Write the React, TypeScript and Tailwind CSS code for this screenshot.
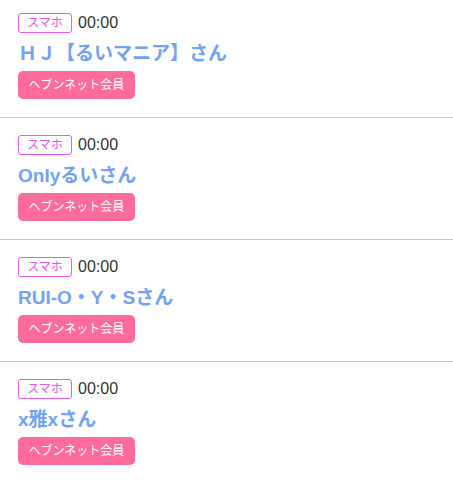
const members = [
  { name: 'ＨＪ【るいマニア】さん' },
  { name: 'Onlyるいさん' },
  { name: 'RUI-O・Y・Sさん' },
  { name: 'x雅xさん' },
]

export default function App() {
  return (
    <div className="w-[453px] h-[480px] bg-white overflow-hidden font-['Liberation_Sans','Noto_Sans_CJK_JP',sans-serif]">
      <ul>
        {members.map((m, i) => (
          <li
            key={i}
            className="px-[18px] pt-[17px] pb-[18px] first:pt-[13px] border-b border-[#cccccc]"
          >
            <div className="flex items-center h-[20px]">
              <span className="w-[54px] h-[20px] flex items-center justify-center border border-[#e85ce8] rounded-[3px] text-[12px] text-[#e05ae0] leading-none">
                スマホ
              </span>
              <span className="ml-[6px] text-[16px] text-[#333333] leading-none">00:00</span>
            </div>
            <div className="mt-[7px] text-[19px] leading-[28px] font-bold text-[#72a2f2]">
              {m.name}
            </div>
            <button
              type="button"
              className="mt-[3px] w-[117px] h-[28px] rounded-[5px] bg-[#ff6b9b] text-white text-[12px] leading-none flex items-center justify-center"
            >
              ヘブンネット会員
            </button>
          </li>
        ))}
      </ul>
    </div>
  )
}
